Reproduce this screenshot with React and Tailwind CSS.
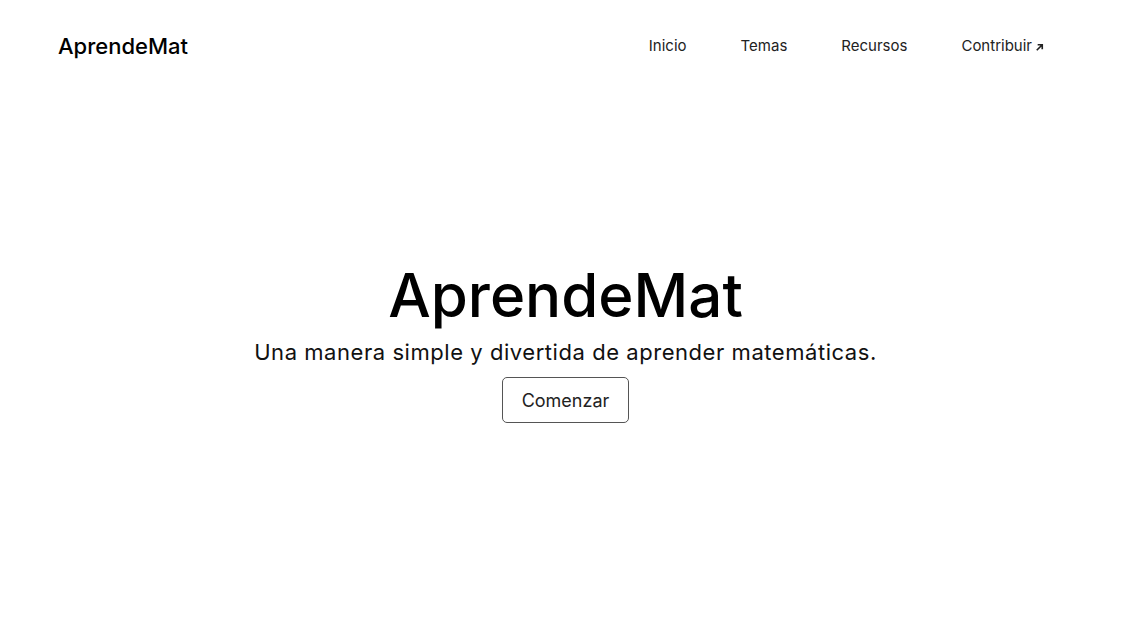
import React from "react";

const links = ["Inicio", "Temas", "Recursos"];

const App = () => {
  return (
    <div
      className="min-h-screen bg-white text-black flex flex-col"
      style={{ fontFamily: "Inter, 'Noto Sans', sans-serif" }}
    >
      <header className="flex flex-row items-center justify-between h-[92px] pl-[58px] pr-[86px]">
        <div className="text-[22px] font-medium tracking-[0px]">AprendeMat</div>
        <nav className="flex flex-row items-center gap-[54px] text-[15px] text-[#222]">
          {links.map((link, index) => (
            <a key={index} href="#" className="cursor-pointer">
              {link}
            </a>
          ))}
          <a href="#" className="flex flex-row items-center cursor-pointer">
            Contribuir
            <svg
              width="11"
              height="11"
              viewBox="0 0 12 12"
              className="ml-[2px] mt-[2px]"
              fill="none"
              stroke="currentColor"
              strokeWidth="1.8"
            >
              <path d="M3 9 L9 3 M4 3 H9 V8" />
            </svg>
          </a>
        </nav>
      </header>
      <main className="flex flex-col items-center pt-[168px]">
        <h1 className="text-[60px] font-medium leading-[70px] tracking-[0px]">AprendeMat</h1>
        <p className="text-[22px] leading-[30px] text-[#111] mt-[7px] tracking-[0.55px]">
          Una manera simple y divertida de aprender matemáticas.
        </p>
        <button className="mt-[10px] w-[127px] h-[46px] border border-[#555] rounded-[5px] text-[18px] text-[#222] bg-white">
          Comenzar
        </button>
      </main>
    </div>
  );
};

export default App;
